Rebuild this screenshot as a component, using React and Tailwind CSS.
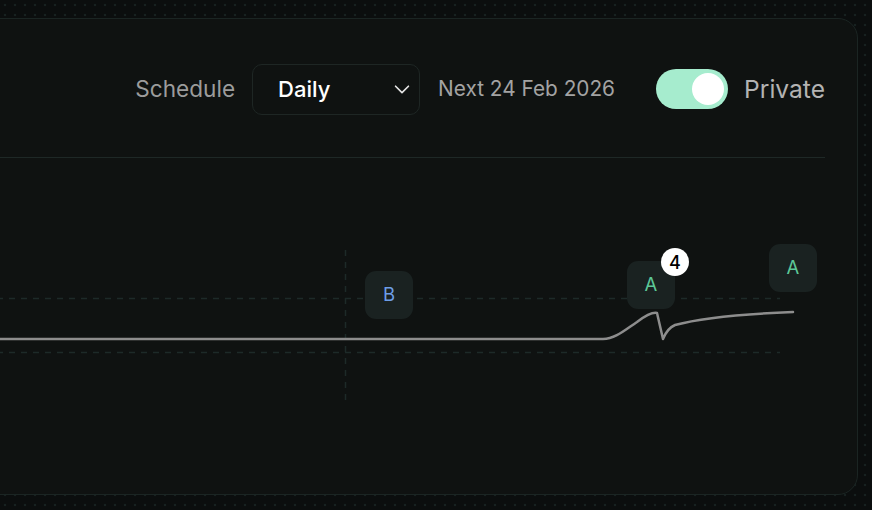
import React from "react";

function Badge({ letter, color, className }) {
  return (
    <div
      className={`absolute w-[48px] h-[48px] rounded-[11px] bg-[#1a2221] flex items-center justify-center text-[18.5px] ${color} ${className}`}
    >
      {letter}
    </div>
  );
}

export default function App() {
  return (
    <div
      className="w-[872px] h-[510px] overflow-hidden flex flex-col pt-[18px] pr-[14px] pb-[15px] bg-[#0b0e0e] bg-[radial-gradient(circle,#172120_1.3px,transparent_1.6px)] bg-[size:10px_10px]"
      style={{ fontFamily: "Inter, 'Noto Sans', sans-serif" }}
    >
      <div className="flex-1 ml-[-41px] flex flex-col rounded-[20px] border border-[#1b2523] bg-[#0f1211]">
        {/* Header */}
        <div className="h-[139px] pt-[2px] flex items-center justify-end border-b border-[#1e2826] mr-[32px]">
          <span className="text-[22.6px] text-[#9c9c9c]">Schedule</span>
          <div className="ml-[17px] w-[168px] h-[51px] rounded-[10px] border border-[#1e2624] flex items-center justify-between pl-[25px] pr-[6px]">
            <span className="text-[22px] text-white font-medium">Daily</span>
            <svg width="22" height="22" viewBox="0 0 24 24" fill="none" stroke="#e5e5e5" strokeWidth="1.8" strokeLinecap="round" strokeLinejoin="round">
              <path d="M5 9l7 7 7-7" />
            </svg>
          </div>
          <span className="ml-[18px] text-[20.8px] text-[#a3a3a3]">Next 24 Feb 2026</span>
          <div className="ml-[41px] w-[72px] h-[40px] rounded-full bg-[#a6ecce] flex items-center justify-end pr-[4px]">
            <div className="w-[32px] h-[32px] rounded-full bg-white" />
          </div>
          <span className="ml-[16px] text-[24.6px] text-[#b3b3b3]">Private</span>
        </div>

        {/* Chart */}
        <div className="relative flex-1">
          <svg className="absolute inset-0" width="897" height="336" viewBox="-40 158 897 336">
            <line x1="-40" y1="298.5" x2="780" y2="298.5" stroke="#1d2a28" strokeWidth="1.5" strokeDasharray="6 6" strokeDashoffset="-1" />
            <line x1="-40" y1="352.5" x2="780" y2="352.5" stroke="#1d2a28" strokeWidth="1.5" strokeDasharray="6 6" strokeDashoffset="-1" />
            <line x1="345.5" y1="250" x2="345.5" y2="400" stroke="#1d2a28" strokeWidth="1.5" strokeDasharray="6 6" />
            <path
              d="M -40 339 L 603 339 C 615 339 625 330 637 322 C 645 316 652 312 657 313 L 663 339 C 665 334 668 328 675 325 C 700 318 740 314 793 312"
              fill="none"
              stroke="#8d8d8d"
              strokeWidth="2.5"
              strokeLinecap="round"
              strokeLinejoin="round"
            />
          </svg>
          <Badge letter="B" color="text-[#6d9ee6]" className="left-[405px] top-[113px]" />
          <Badge letter="A" color="text-[#5cc898]" className="left-[667px] top-[103px]" />
          <Badge letter="A" color="text-[#5cc898]" className="left-[809px] top-[86px]" />
          <div className="absolute left-[701px] top-[90px] w-[28px] h-[28px] rounded-full bg-white flex items-center justify-center text-[18px] font-medium text-black">
            4
          </div>
        </div>
      </div>
    </div>
  );
}
